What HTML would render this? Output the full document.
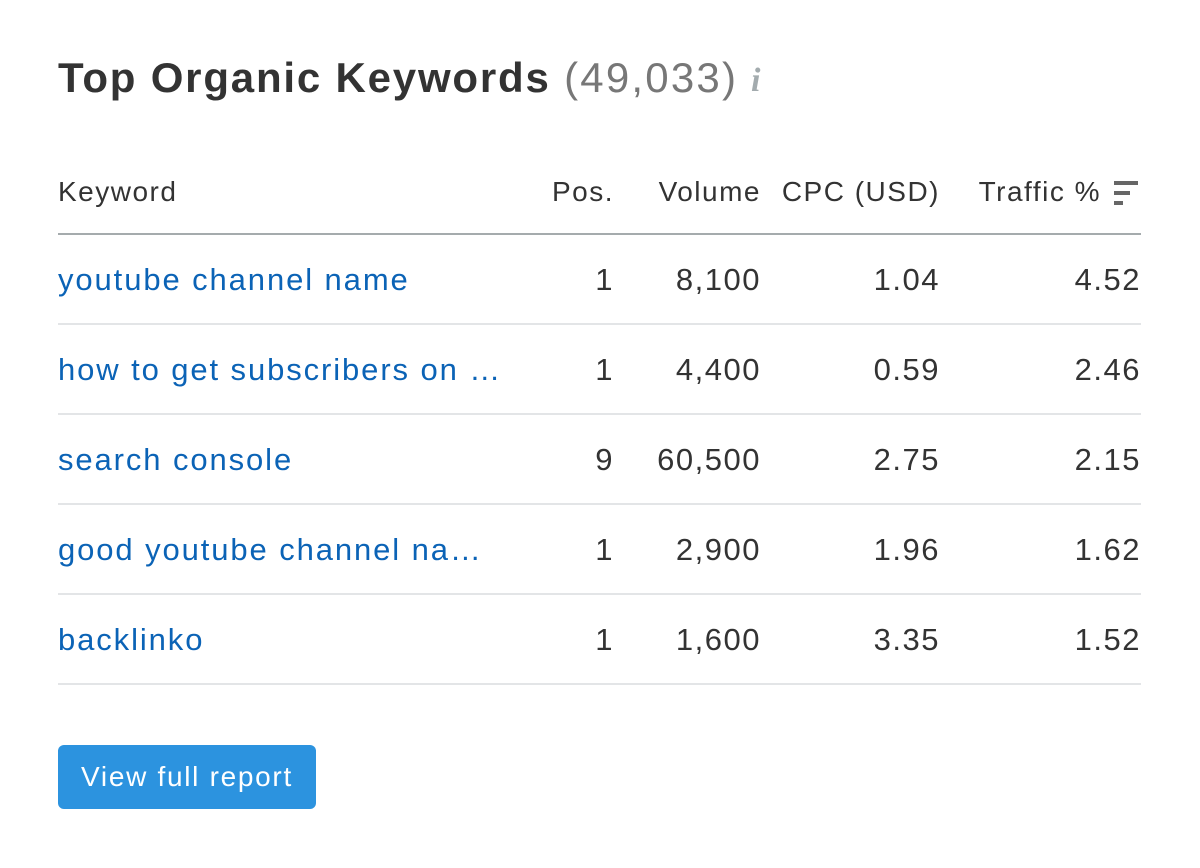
<!DOCTYPE html>
<html><head><style>
body{margin:0;width:1200px;height:868px;background:#fff;font-family:"Liberation Sans",sans-serif;color:#333;position:relative;overflow:hidden}
.a{position:absolute;white-space:nowrap}
.t{left:58px;top:54px;font-size:42px;font-weight:bold;color:#333;letter-spacing:1.8px}
.t span{font-weight:normal;color:#777;letter-spacing:2.2px}
.h{top:176px;font-size:28px;color:#333;letter-spacing:1.5px}
.r{font-size:31px;color:#333;letter-spacing:1.5px}
.k{color:#0b63b6;left:58px;letter-spacing:1.9px}
.line{position:absolute;left:58px;width:1083px;height:2px;background:#e3e5e7}
</style></head><body>
<div class="a t">Top Organic Keywords <span>(49,033)</span></div>
<div class="a" style="left:751px;top:62px;font-size:34px;font-weight:bold;font-style:italic;color:#a3abae;font-family:'Liberation Serif',serif">i</div>
<div class="a h" style="left:58px">Keyword</div>
<div class="a h" style="right:586px">Pos.</div>
<div class="a h" style="right:439px">Volume</div>
<div class="a h" style="right:260px">CPC (USD)</div>
<div class="a h" style="right:99px">Traffic %</div>
<div class="a" style="left:1114px;top:181px;width:24px;height:4px;background:#666"></div>
<div class="a" style="left:1114px;top:191px;width:16px;height:4px;background:#666"></div>
<div class="a" style="left:1114px;top:201px;width:9px;height:4px;background:#666"></div>
<div class="line" style="top:233px;background:#a5abad"></div>

<div class="a r k" style="top:262px">youtube channel name</div>
<div class="a r" style="top:262px;right:586px">1</div>
<div class="a r" style="top:262px;right:439px">8,100</div>
<div class="a r" style="top:262px;right:260px">1.04</div>
<div class="a r" style="top:262px;right:59px">4.52</div>
<div class="line" style="top:323px"></div>

<div class="a r k" style="top:352px">how to get subscribers on …</div>
<div class="a r" style="top:352px;right:586px">1</div>
<div class="a r" style="top:352px;right:439px">4,400</div>
<div class="a r" style="top:352px;right:260px">0.59</div>
<div class="a r" style="top:352px;right:59px">2.46</div>
<div class="line" style="top:413px"></div>

<div class="a r k" style="top:442px">search console</div>
<div class="a r" style="top:442px;right:586px">9</div>
<div class="a r" style="top:442px;right:439px">60,500</div>
<div class="a r" style="top:442px;right:260px">2.75</div>
<div class="a r" style="top:442px;right:59px">2.15</div>
<div class="line" style="top:503px"></div>

<div class="a r k" style="top:532px">good youtube channel na…</div>
<div class="a r" style="top:532px;right:586px">1</div>
<div class="a r" style="top:532px;right:439px">2,900</div>
<div class="a r" style="top:532px;right:260px">1.96</div>
<div class="a r" style="top:532px;right:59px">1.62</div>
<div class="line" style="top:593px"></div>

<div class="a r k" style="top:622px">backlinko</div>
<div class="a r" style="top:622px;right:586px">1</div>
<div class="a r" style="top:622px;right:439px">1,600</div>
<div class="a r" style="top:622px;right:260px">3.35</div>
<div class="a r" style="top:622px;right:59px">1.52</div>
<div class="line" style="top:683px"></div>

<div class="a" style="left:58px;top:745px;width:258px;height:64px;background:#2c93df;border-radius:6px;color:#fff;font-size:28px;line-height:64px;text-align:center;letter-spacing:1.7px">View full report</div>
</body></html>
